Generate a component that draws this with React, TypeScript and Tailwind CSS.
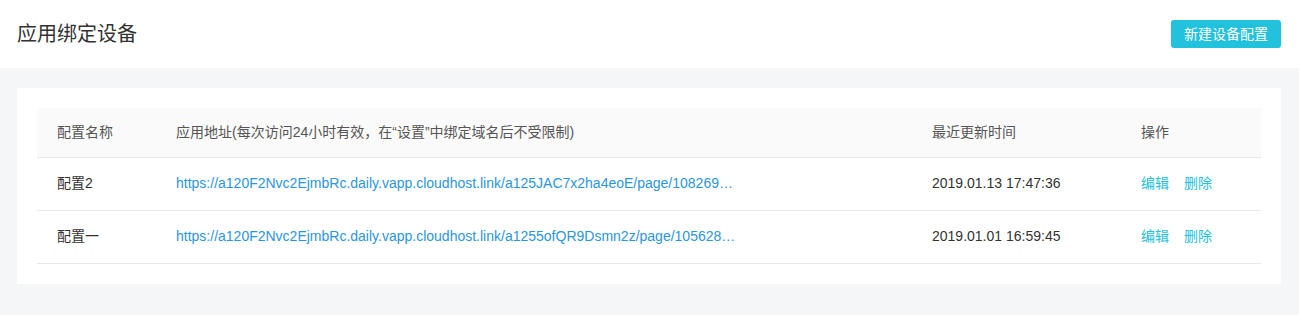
import React from "react";

const configs = [
  {
    id: 2,
    name: "配置2",
    url: "https://a120F2Nvc2EjmbRc.daily.vapp.cloudhost.link/a125JAC7x2ha4eoE/page/1082693341",
    updatedAt: "2019.01.13 17:47:36",
  },
  {
    id: 1,
    name: "配置一",
    url: "https://a120F2Nvc2EjmbRc.daily.vapp.cloudhost.link/a1255ofQR9Dsmn2z/page/1056284412",
    updatedAt: "2019.01.01 16:59:45",
  },
];

const font = "font-['Liberation_Sans','Noto_Sans_CJK_SC',sans-serif]";

export default function App() {
  return (
    <div className={`min-h-[315px] bg-[#f5f6f8] ${font}`}>
      {/* Page header */}
      <div className="h-[68px] bg-white pl-[17px] pr-[18px] flex items-center justify-between">
        <h1 className="text-[20px] text-[#333] leading-none">应用绑定设备</h1>
        <button className="h-[28px] w-[110px] rounded-[3px] bg-[#22c1dc] text-white text-[14px] leading-none">
          新建设备配置
        </button>
      </div>

      <div className="pl-[17px] pr-[18px] pt-[20px] pb-[31px]">
        <div className="bg-white p-[20px]">
          <table className="w-full text-[14px] text-left border-collapse table-fixed">
            <colgroup>
              <col className="w-[139px]" />
              <col className="w-[756px]" />
              <col className="w-[209px]" />
              <col />
            </colgroup>
            <thead>
              <tr className="bg-[#fafafa] h-[49px] border-b border-[#e8e8e8]">
                <th className="font-normal text-[#555] pl-[20px]">配置名称</th>
                <th className="font-normal text-[#555]">应用地址(每次访问24小时有效，在“设置”中绑定域名后不受限制)</th>
                <th className="font-normal text-[#555]">最近更新时间</th>
                <th className="font-normal text-[#555]">操作</th>
              </tr>
            </thead>
            <tbody>
              {configs.map((c) => (
                <tr key={c.id} className="h-[53px] border-b border-[#e8e8e8]">
                  <td className="pl-[20px] text-[#333]">{c.name}</td>
                  <td>
                    <a className="block max-w-[563px] truncate text-[#2b95de]">{c.url}</a>
                  </td>
                  <td className="text-[#333]">{c.updatedAt}</td>
                  <td className="text-[#23c1dc]">
                    <span>编辑</span>
                    <span className="ml-[15px]">删除</span>
                  </td>
                </tr>
              ))}
            </tbody>
          </table>
        </div>
      </div>
    </div>
  );
}
